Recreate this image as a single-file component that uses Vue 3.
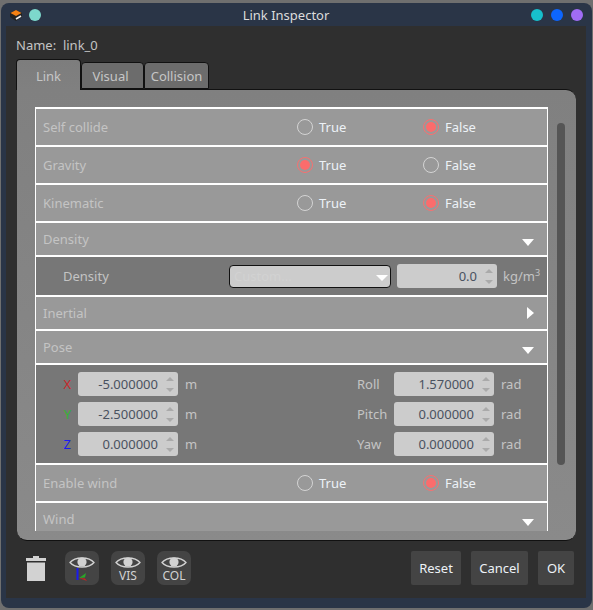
<template>
  <div class="window">
    <div class="titlebar">
      <svg class="logo" width="14" height="14" viewBox="0 0 14 14">
        <path d="M1 5 L7 2 L13 5 L13 9 L7 13 L1 9 Z" fill="#222" />
        <path d="M1.5 5 L7 2 L12.5 5 L7 8 Z" fill="#f58113" />
        <path d="M7 11 L12 8" stroke="#eee" stroke-width="1.8" />
      </svg>
      <span class="dot dot-left"></span>
      <span class="title">Link Inspector</span>
      <span class="dots">
        <span class="dot dot-cyan"></span>
        <span class="dot dot-blue"></span>
        <span class="dot dot-purple"></span>
      </span>
    </div>
    <div class="body">
      <div class="name">Name:&nbsp; link_0</div>
      <div class="tabs">
        <div class="tab active">Link</div>
        <div class="tab tab-visual">Visual</div>
        <div class="tab tab-collision">Collision</div>
      </div>
      <div class="pane">
        <div class="list">
          <template v-for="row in rows" :key="row.label">
            <div v-if="row.kind === 'radio'" class="row radio-row">
              <span class="row-label">{{ row.label }}</span>
              <span class="choice choice-true">
                <span class="radio" :class="{ on: row.value }"></span>True
              </span>
              <span class="choice">
                <span class="radio" :class="{ on: !row.value }"></span>False
              </span>
            </div>
            <div v-else-if="row.kind === 'header'" class="row header-row">
              <span class="row-label">{{ row.label }}</span>
              <span class="caret" :class="row.open ? 'down' : 'right'"></span>
            </div>
            <div v-else-if="row.kind === 'density'" class="row density-row">
              <span class="density-label">Density</span>
              <div class="combo">
                <span class="combo-text">Custom...</span>
                <span class="caret down small"></span>
              </div>
              <div class="spin density-spin">
                <span>0.0</span>
                <span class="arrows"><i class="up"></i><i class="dn"></i></span>
              </div>
              <span class="unit">kg/m<sup>3</sup></span>
            </div>
            <div v-else class="row pose-row">
              <div v-for="p in pose" :key="p.left" class="pose-line">
                <span class="axis" :style="{ color: p.color }">{{ p.left }}</span>
                <div class="spin">
                  <span>{{ p.lv }}</span>
                  <span class="arrows"><i class="up"></i><i class="dn"></i></span>
                </div>
                <span class="unit unit-m">m</span>
                <span class="rot">{{ p.right }}</span>
                <div class="spin">
                  <span>{{ p.rv }}</span>
                  <span class="arrows"><i class="up"></i><i class="dn"></i></span>
                </div>
                <span class="unit unit-m">rad</span>
              </div>
            </div>
          </template>
        </div>
        <div class="scrollbar"></div>
      </div>
      <div class="footer">
        <svg class="trash" width="22" height="28" viewBox="0 0 22 28">
          <path d="M8 2 H14 V4 H21 V7 H1 V4 H8 Z" fill="#d2d2d2" />
          <path d="M2 8.5 H20 V27 H2 Z" fill="#d2d2d2" />
        </svg>
        <div class="icon-btn first">
          <svg width="26" height="13" viewBox="0 0 26 13">
            <path d="M1 6.5 C6 0.5 20 0.5 25 6.5 C20 12.5 6 12.5 1 6.5 Z" fill="none" stroke="#d2d2d2" stroke-width="1.3" />
            <circle cx="13" cy="6" r="4.6" fill="#d2d2d2" />
          </svg>
          <svg class="axes" width="14" height="13" viewBox="0 0 14 13">
            <path d="M2.5 0 V12" stroke="#1a1aee" stroke-width="2" />
            <path d="M4 10 L11 5 L10 9.5 Z" fill="#2aa52a" />
            <path d="M4 10 L10 10.5 L12 13 Z" fill="#c92222" />
          </svg>
        </div>
        <div class="icon-btn">
          <svg width="26" height="13" viewBox="0 0 26 13">
            <path d="M1 6.5 C6 0.5 20 0.5 25 6.5 C20 12.5 6 12.5 1 6.5 Z" fill="none" stroke="#d2d2d2" stroke-width="1.3" />
            <circle cx="13" cy="6" r="4.6" fill="#d2d2d2" />
          </svg>
          <span class="icon-text">VIS</span>
        </div>
        <div class="icon-btn">
          <svg width="26" height="13" viewBox="0 0 26 13">
            <path d="M1 6.5 C6 0.5 20 0.5 25 6.5 C20 12.5 6 12.5 1 6.5 Z" fill="none" stroke="#d2d2d2" stroke-width="1.3" />
            <circle cx="13" cy="6" r="4.6" fill="#d2d2d2" />
          </svg>
          <span class="icon-text">COL</span>
        </div>
        <div class="spacer"></div>
        <button class="btn btn-reset">Reset</button>
        <button class="btn btn-cancel">Cancel</button>
        <button class="btn btn-ok">OK</button>
      </div>
    </div>
  </div>
</template>

<script setup>
const rows = [
  { kind: 'radio', label: 'Self collide', value: false },
  { kind: 'radio', label: 'Gravity', value: true },
  { kind: 'radio', label: 'Kinematic', value: false },
  { kind: 'header', label: 'Density', open: true },
  { kind: 'density', label: 'density-body' },
  { kind: 'header', label: 'Inertial', open: false },
  { kind: 'header', label: 'Pose', open: true },
  { kind: 'pose', label: 'pose-body' },
  { kind: 'radio', label: 'Enable wind', value: false },
  { kind: 'header', label: 'Wind', open: true }
]

const pose = [
  { left: 'X', color: '#c8282a', lv: '-5.000000', right: 'Roll', rv: '1.570000' },
  { left: 'Y', color: '#33b533', lv: '-2.500000', right: 'Pitch', rv: '0.000000' },
  { left: 'Z', color: '#1a1af0', lv: '0.000000', right: 'Yaw', rv: '0.000000' }
]
</script>

<style>
html,
body {
  margin: 0;
  background: #6f6f6f;
}
</style>

<style scoped>
.window {
  width: 591px;
  height: 605px;
  margin: 3px 0 0 1px;
  box-sizing: border-box;
  padding: 0 6px 10px 5px;
  background: #2a3547;
  border-radius: 8px;
  display: flex;
  flex-direction: column;
  font-family: 'Noto Sans', sans-serif;
  font-size: 13px;
  color: #c4c4c4;
}
.titlebar {
  height: 23px;
  flex: none;
  display: flex;
  align-items: center;
  position: relative;
  color: #dcdcdc;
}
.logo {
  margin: 0 0 0 3px;
}
.dot {
  display: inline-block;
  width: 12px;
  height: 12px;
  border-radius: 50%;
}
.dot-left {
  background: #7dd8cc;
  margin-left: 6px;
}
.dot-cyan {
  background: #17c0cc;
}
.dot-blue {
  background: #0d66ff;
}
.dot-purple {
  background: #a06cf5;
}
.title {
  position: absolute;
  left: 0;
  right: 20px;
  text-align: center;
}
.dots {
  position: absolute;
  right: 3px;
  top: 6px;
  display: flex;
  gap: 8px;
}
.body {
  flex: 1;
  background: #2f2f2f;
  display: flex;
  flex-direction: column;
  padding: 0 10px 0 10px;
  min-height: 0;
}
.name {
  height: 18px;
  line-height: 18px;
  margin-top: 10px;
}
.tabs {
  height: 30px;
  margin-top: 5px;
  display: flex;
  align-items: flex-end;
  position: relative;
  z-index: 1;
  flex: none;
}
.tab {
  box-sizing: border-box;
  height: 27px;
  line-height: 27px;
  text-align: center;
  background: #6c6c6c;
  border: 1px solid #111;
  border-radius: 4px 4px 0 0;
  color: #c6c6c6;
  flex: none;
}
.tab.active {
  width: 65px;
  height: 31px;
  line-height: 33px;
  background: linear-gradient(#7d7d7d, #808080);
  border-bottom: none;
  margin-bottom: -1px;
}
.tab-visual {
  width: 63px;
  padding-right: 4px;
}
.tab-collision {
  width: 65px;
}
.pane {
  width: 559px;
  height: 452px;
  margin-left: 1px;
  box-sizing: border-box;
  flex: none;
  position: relative;
  background: linear-gradient(#808080, #8a8a8a);
  border-top: 1px solid #111;
  border-bottom: 1px solid #111;
  border-radius: 0 10px 10px 10px;
  padding: 17px 0 0 18px;
}
.list {
  width: 513px;
  height: 424px;
  overflow: hidden;
}
.row {
  background: #999;
  border: solid #fff;
  border-width: 2px 1px 0 1px;
  color: #c4c4c4;
  display: flex;
  align-items: center;
}
.row-label {
  margin-left: 7px;
}
.radio-row {
  height: 35px;
  padding-bottom: 1px;
  position: relative;
}
.choice {
  position: absolute;
  display: flex;
  align-items: center;
  gap: 6px;
  color: #edf2f7;
  left: 387px;
}
.choice-true {
  left: 261px;
}
.radio {
  box-sizing: border-box;
  width: 16px;
  height: 16px;
  border-radius: 50%;
  border: 1px solid #d4d4d4;
  display: inline-block;
  position: relative;
}
.radio.on {
  border-color: #f87070;
}
.radio.on::after {
  content: '';
  position: absolute;
  left: 2px;
  top: 2px;
  width: 10px;
  height: 10px;
  border-radius: 50%;
  background: #fb6c6c;
}
.header-row {
  height: 32px;
  justify-content: space-between;
}
.caret {
  width: 0;
  height: 0;
  display: block;
}
.caret.down {
  border-left: 6px solid transparent;
  border-right: 6px solid transparent;
  border-top: 7px solid #fff;
  margin: 6px 13px 0 0;
}
.caret.right {
  border-top: 6px solid transparent;
  border-bottom: 6px solid transparent;
  border-left: 7px solid #fff;
  margin-right: 13px;
}
.density-row {
  height: 38px;
  background: #777;
}
.density-label {
  flex: none;
  width: 166px;
  margin-left: 27px;
}
.combo {
  flex: none;
  box-sizing: border-box;
  width: 162px;
  height: 23px;
  border: 1px solid #111;
  border-radius: 4px;
  background: #ccc;
  display: flex;
  align-items: center;
  justify-content: space-between;
}
.combo-text {
  color: #d2d2d2;
  margin-left: 4px;
}
.caret.small {
  border-top-width: 6px;
  margin: 3px 2px 0 0;
}
.spin {
  flex: none;
  box-sizing: border-box;
  width: 100px;
  height: 24px;
  background: #ccc;
  border-radius: 3px;
  display: flex;
  align-items: center;
  justify-content: flex-end;
  color: #4a5260;
}
.density-spin {
  margin-left: 6px;
}
.arrows {
  box-sizing: border-box;
  width: 20px;
  height: 100%;
  padding-left: 4px;
  display: flex;
  flex-direction: column;
  justify-content: center;
  align-items: center;
  gap: 7px;
}
.arrows i {
  display: block;
  width: 0;
  height: 0;
  border-left: 4px solid transparent;
  border-right: 4px solid transparent;
}
.arrows .up {
  border-bottom: 4px solid #aaa;
}
.arrows .dn {
  border-top: 4px solid #aaa;
}
.unit {
  flex: none;
  margin-left: 6px;
  color: #c4c4c4;
}
.unit sup {
  font-size: 9px;
  line-height: 0;
}
.pose-row {
  height: 98px;
  background: #777;
  flex-direction: column;
  align-items: stretch;
  justify-content: center;
  gap: 6px;
}
.pose-line {
  display: flex;
  align-items: center;
  height: 24px;
}
.axis {
  flex: none;
  width: 35px;
  margin-right: 7px;
  text-align: right;
}
.unit-m {
  width: 30px;
  margin-left: 7px;
}
.rot {
  flex: none;
  width: 37px;
  margin-left: 142px;
}
.scrollbar {
  position: absolute;
  left: 540px;
  top: 33px;
  width: 8px;
  height: 342px;
  background: #555;
  border-radius: 4px;
}
.footer {
  display: flex;
  align-items: center;
  height: 34px;
  margin-top: 10px;
}
.trash {
  margin-left: 9px;
}
.icon-btn {
  box-sizing: border-box;
  width: 34px;
  height: 34px;
  margin-left: 12px;
  background: #444;
  border-radius: 7px;
  display: flex;
  flex-direction: column;
  align-items: center;
  justify-content: flex-start;
  padding-top: 5px;
}
.icon-btn.first {
  margin-left: 18px;
}
.axes {
  margin-top: -1px;
}
.icon-text {
  font-size: 12px;
  line-height: 14px;
  color: #d2d2d2;
}
.spacer {
  flex: 1;
}
.btn {
  height: 34px;
  padding: 0;
  border: none;
  border-radius: 2px;
  background: #444;
  color: #edf2f7;
  font: inherit;
  margin-left: 10px;
}
.btn-reset {
  width: 50px;
}
.btn-cancel {
  width: 57px;
}
.btn-ok {
  width: 36px;
  margin-right: 2px;
}
</style>
